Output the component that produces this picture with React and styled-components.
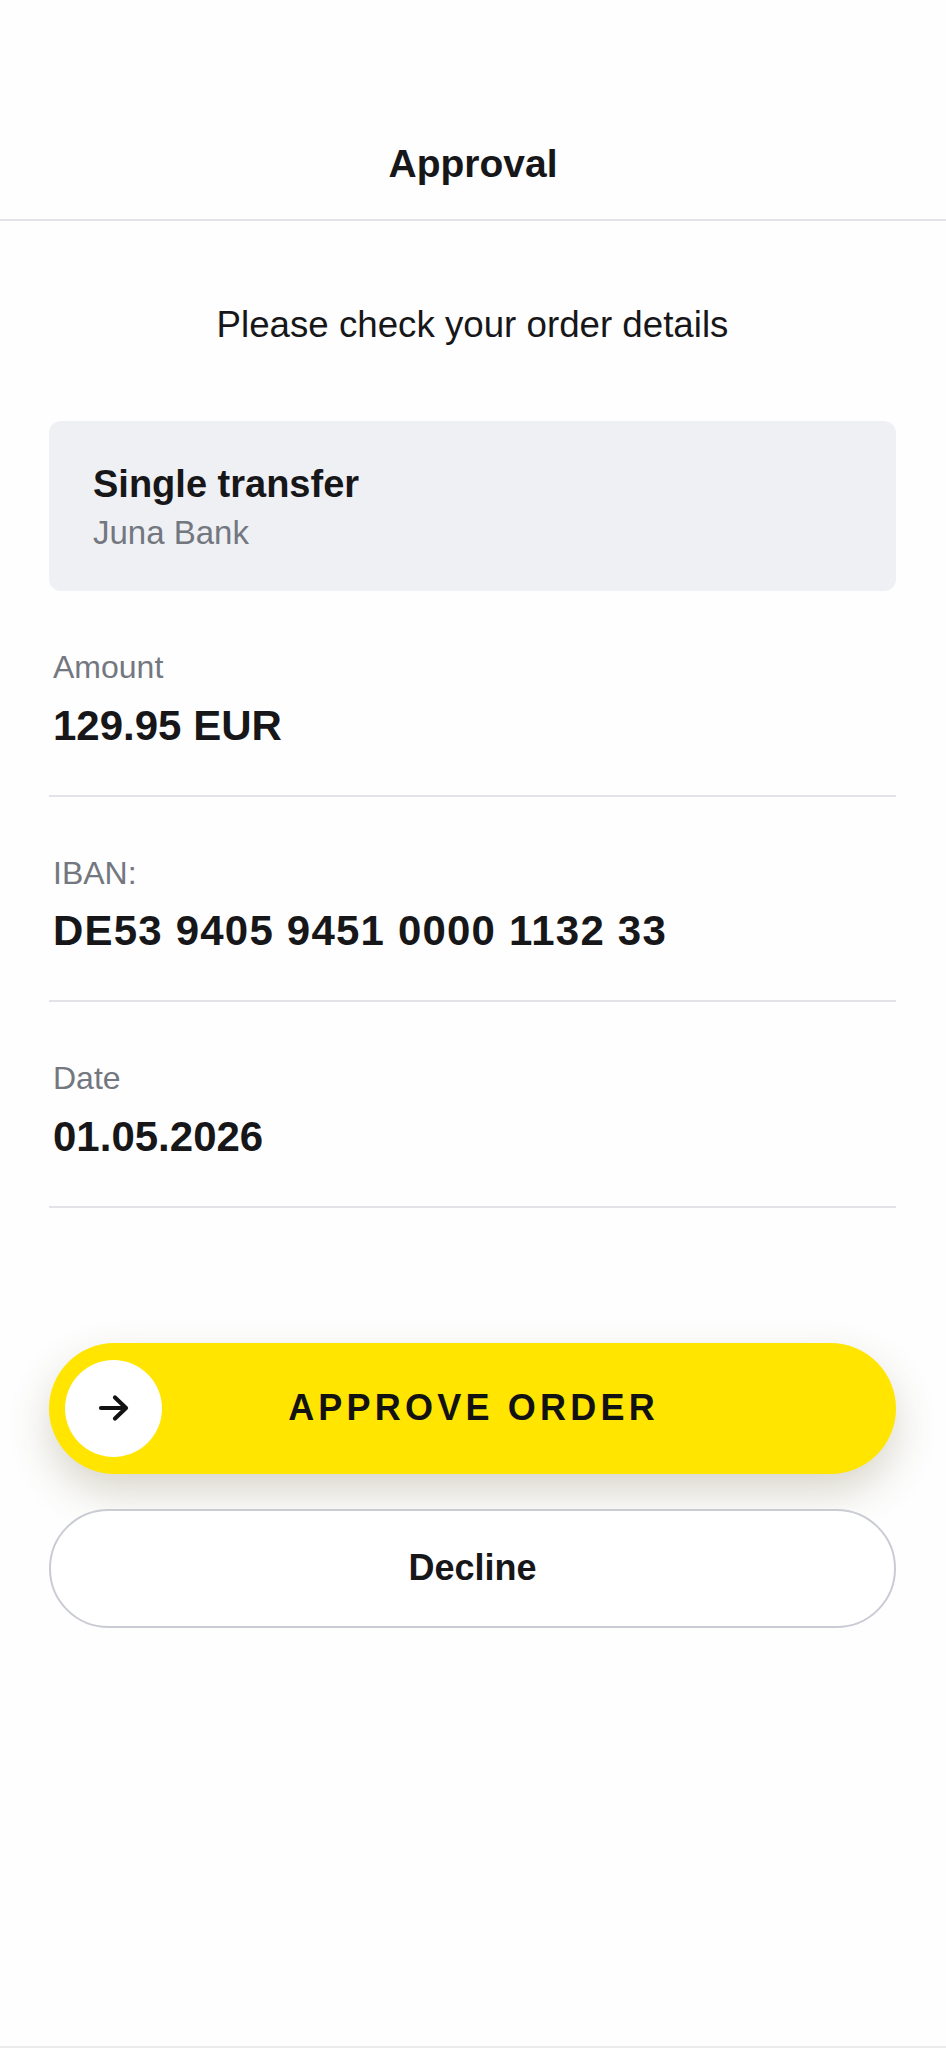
import React from 'react';
import styled, { createGlobalStyle } from 'styled-components';

const GlobalStyle = createGlobalStyle`
  html, body {
    margin: 0;
    padding: 0;
    background: #fefefe;
  }
  * {
    box-sizing: border-box;
  }
  body {
    font-family: "Liberation Sans", Arial, sans-serif;
    color: #17171a;
  }
`;

const Screen = styled.div`
  width: 946px;
  min-height: 2048px;
  display: flex;
  flex-direction: column;
  background: #fefefe;
  border-bottom: 2px solid #ececee;
`;

const Header = styled.header`
  padding: 144px 0 36px;
  border-bottom: 2px solid #e4e4e8;
  text-align: center;
`;

const Title = styled.h1`
  margin: 0;
  font-size: 39px;
  line-height: 39px;
  font-weight: 700;
`;

const Body = styled.main`
  padding: 0 50px 0 49px;
  display: flex;
  flex-direction: column;
`;

const Intro = styled.p`
  margin: 86px 0 0;
  font-size: 36.7px;
  line-height: 36px;
  text-align: center;
`;

const OrderCard = styled.section`
  margin-top: 78px;
  padding: 44px 44px 42px;
  background: #eff0f4;
  border-radius: 12px;
  display: flex;
  flex-direction: column;
  gap: 13px;
`;

const CardTitle = styled.div`
  font-size: 38px;
  line-height: 38px;
  font-weight: 700;
`;

const CardSub = styled.div`
  font-size: 33px;
  line-height: 33px;
  color: #737780;
`;

const DetailRow = styled.div`
  padding: 61px 4px 48px;
  border-bottom: 2px solid #e3e3e8;
  display: flex;
  flex-direction: column;
  gap: 21.5px;
`;

const Label = styled.div`
  font-size: 32px;
  line-height: 31px;
  color: #737780;
`;

const Value = styled.div`
  font-size: 42px;
  line-height: 42px;
  font-weight: 700;
  letter-spacing: ${({ $wide }) => ($wide ? '1.2px' : 'normal')};
`;

const Actions = styled.div`
  margin-top: 135px;
  display: flex;
  flex-direction: column;
  gap: 35px;
`;

const ApproveButton = styled.button`
  height: 131px;
  padding: 0 16px;
  border: none;
  border-radius: 66px;
  background: #ffe500;
  box-shadow: 0 18px 42px rgba(95, 88, 40, 0.24);
  display: grid;
  grid-template-columns: 97px 1fr 97px;
  align-items: center;
  font-family: inherit;
  cursor: pointer;
`;

const Knob = styled.span`
  width: 97px;
  height: 97px;
  border-radius: 50%;
  background: #ffffff;
  display: flex;
  align-items: center;
  justify-content: center;
`;

const ApproveText = styled.span`
  font-size: 36px;
  font-weight: 700;
  letter-spacing: 4.2px;
  color: #121212;
  text-align: center;
  padding-left: 2px;
`;

const DeclineButton = styled.button`
  height: 119px;
  border: 2px solid #c9ccd3;
  border-radius: 60px;
  background: #ffffff;
  font-family: inherit;
  font-size: 36px;
  font-weight: 700;
  color: #17171a;
  cursor: pointer;
`;

const Arrow = () => (
  <svg width="34" height="30" viewBox="0 0 34 30" fill="none">
    <path
      d="M4 15H29M18 4.5L29 15L18 25.5"
      stroke="#121212"
      strokeWidth="4.2"
      strokeLinecap="round"
      strokeLinejoin="round"
    />
  </svg>
);

const details = [
  { label: 'Amount', value: '129.95 EUR' },
  { label: 'IBAN:', value: 'DE53 9405 9451 0000 1132 33', wide: true },
  { label: 'Date', value: '01.05.2026' },
];

export default function App() {
  return (
    <>
      <GlobalStyle />
      <Screen>
        <Header>
          <Title>Approval</Title>
        </Header>
        <Body>
          <Intro>Please check your order details</Intro>
          <OrderCard>
            <CardTitle>Single transfer</CardTitle>
            <CardSub>Juna Bank</CardSub>
          </OrderCard>
          {details.map((d) => (
            <DetailRow key={d.label}>
              <Label>{d.label}</Label>
              <Value $wide={d.wide}>{d.value}</Value>
            </DetailRow>
          ))}
          <Actions>
            <ApproveButton>
              <Knob>
                <Arrow />
              </Knob>
              <ApproveText>APPROVE ORDER</ApproveText>
              <span />
            </ApproveButton>
            <DeclineButton>Decline</DeclineButton>
          </Actions>
        </Body>
      </Screen>
    </>
  );
}
